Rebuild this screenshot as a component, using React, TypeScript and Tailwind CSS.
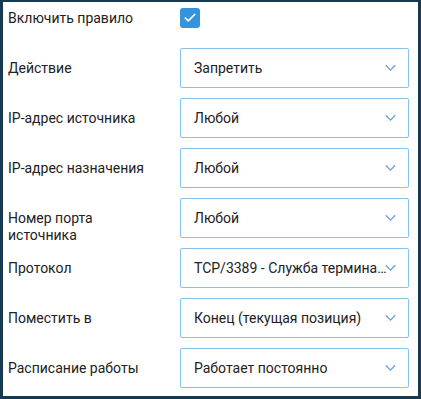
import { Check } from "lucide-react";

const rows = [
  { label: ["Действие"], value: "Запретить" },
  { label: ["IP-адрес источника"], value: "Любой" },
  { label: ["IP-адрес назначения"], value: "Любой" },
  { label: ["Номер порта", "источника"], value: "Любой" },
  { label: ["Протокол"], value: "TCP/3389 - Служба терминалов" },
  { label: ["Поместить в"], value: "Конец (текущая позиция)" },
  { label: ["Расписание работы"], value: "Работает постоянно" },
];

const Chevron = () => (
  <svg
    className="absolute right-[12px] top-1/2 -translate-y-1/2"
    width="11"
    height="7"
    viewBox="0 0 11 7"
    fill="none"
  >
    <path d="M0.8 0.8 L5.5 5.6 L10.2 0.8" stroke="#6a9fd6" strokeWidth="1.3" />
  </svg>
);

const SelectBox = ({ value }: { value: string }) => (
  <div className="relative flex h-[40px] w-[229px] shrink-0 items-center rounded-[2px] border border-[#85c3ef] bg-white pl-[13px] pr-[21px]">
    <span className="truncate text-[14px] text-[#222]">{value}</span>
    <Chevron />
  </div>
);

export default function App() {
  return (
    <div
      className="box-border h-[399px] w-[421px] border-x-[3px] border-t-[2px] border-b-[3px] border-[#183a50] bg-white pt-[6px] pl-[5px]"
      style={{ fontFamily: "Roboto, 'Noto Sans', sans-serif" }}
    >
      <div className="flex h-[20px] items-center">
        <div className="w-[172px] text-[14px] text-[#222]">Включить правило</div>
        <div className="flex h-[20px] w-[20px] items-center justify-center rounded-[3px] bg-[#3592dd]">
          <Check className="h-[14px] w-[14px] text-white" strokeWidth={3} />
        </div>
      </div>
      <div className="mt-[20px] flex flex-col gap-[10px]">
        {rows.map((r) => (
          <div key={r.value + r.label[0]} className="flex h-[40px] items-start">
            <div className="w-[172px] shrink-0 pt-[12px] pr-[12px] text-[14px] leading-[17px] text-[#222]">
              {r.label.map((line) => (
                <div key={line}>{line}</div>
              ))}
            </div>
            <SelectBox value={r.value} />
          </div>
        ))}
      </div>
    </div>
  );
}
